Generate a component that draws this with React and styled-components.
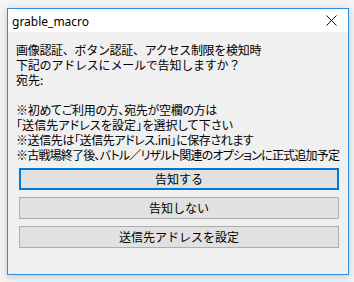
import React from "react";
import styled, { createGlobalStyle } from "styled-components";

const Global = createGlobalStyle`
  html, body { margin: 0; padding: 0; background: #f4f4f4; }
  body { width: 354px; height: 282px; overflow: hidden; }
`;

const Stage = styled.div`
  padding: 8px 0 0 7px;
`;

const Window = styled.div`
  width: 340px;
  height: 265px;
  border: 1px solid #2b8ae2;
  background: #f0f0f0;
  box-shadow: 0 2px 8px rgba(0, 0, 0, 0.18);
  display: flex;
  flex-direction: column;
`;

const TitleBar = styled.div`
  height: 23px;
  background: #ffffff;
  display: flex;
  align-items: center;
  justify-content: space-between;
  padding: 0 6px 0 4px;
  font-family: "Noto Sans", "Open Sans", sans-serif;
  font-size: 12px;
  color: #000;
`;

const Title = styled.span`
  line-height: 23px;
  padding-top: 1px;
`;

const CloseBox = styled.div`
  width: 22px;
  height: 22px;
  display: flex;
  align-items: center;
  justify-content: center;
`;

const Body = styled.div`
  flex: 1;
  padding: 10px 10px 0 8px;
  display: flex;
  flex-direction: column;
`;

const Message = styled.div`
  font-family: "Noto Sans CJK JP", "Noto Sans", sans-serif;
  font-size: 12px;
  color: #000;
`;

const Line = styled.div`
  height: 15px;
  line-height: 15px;
  white-space: nowrap;
  letter-spacing: ${(p) => p.$spacing ?? -0.2}px;
  font-feature-settings: ${(p) => (p.$palt ? '"palt"' : "normal")};
`;

const Buttons = styled.div`
  margin-top: 6px;
  padding-left: 3px;
  display: flex;
  flex-direction: column;
  gap: 7px;
`;

const Button = styled.button`
  width: 320px;
  height: 22px;
  box-sizing: border-box;
  margin: 0;
  padding: 0;
  background: #e1e1e1;
  border: ${(p) => (p.$focused ? "2px solid #0078d7" : "1px solid #adadad")};
  font-family: "Noto Sans CJK JP", "Noto Sans", sans-serif;
  font-size: 12px;
  line-height: 18px;
  color: #000;
  text-align: center;
`;

const lines = [
  { text: "画像認証、ボタン認証、アクセス制限を検知時", spacing: -0.3 },
  { text: "下記のアドレスにメールで告知しますか？", spacing: -0.2 },
  { text: "宛先:", spacing: 0 },
  { text: "", spacing: 0 },
  { text: "※初めてご利用の方、宛先が空欄の方は", spacing: -0.3, palt: true },
  { text: "「送信先アドレスを設定」を選択して下さい", spacing: 0.1, palt: true },
  { text: "※送信先は「送信先アドレス.ini」に保存されます", spacing: -0.4, palt: true },
  { text: "※古戦場終了後、バトル／リザルト関連のオプションに正式追加予定", spacing: -0.8, palt: true },
];

export default function App() {
  return (
    <>
      <Global />
      <Stage>
        <Window>
          <TitleBar>
            <Title>grable_macro</Title>
            <CloseBox>
              <svg width="11" height="11" viewBox="0 0 11 11">
                <path d="M0.5 0.5 L10.5 10.5 M10.5 0.5 L0.5 10.5" stroke="#111" strokeWidth="1" fill="none" />
              </svg>
            </CloseBox>
          </TitleBar>
          <Body>
            <Message>
              {lines.map((l, i) => (
                <Line key={i} $spacing={l.spacing} $palt={l.palt}>
                  {l.text}
                </Line>
              ))}
            </Message>
            <Buttons>
              <Button $focused>告知する</Button>
              <Button>告知しない</Button>
              <Button>送信先アドレスを設定</Button>
            </Buttons>
          </Body>
        </Window>
      </Stage>
    </>
  );
}
